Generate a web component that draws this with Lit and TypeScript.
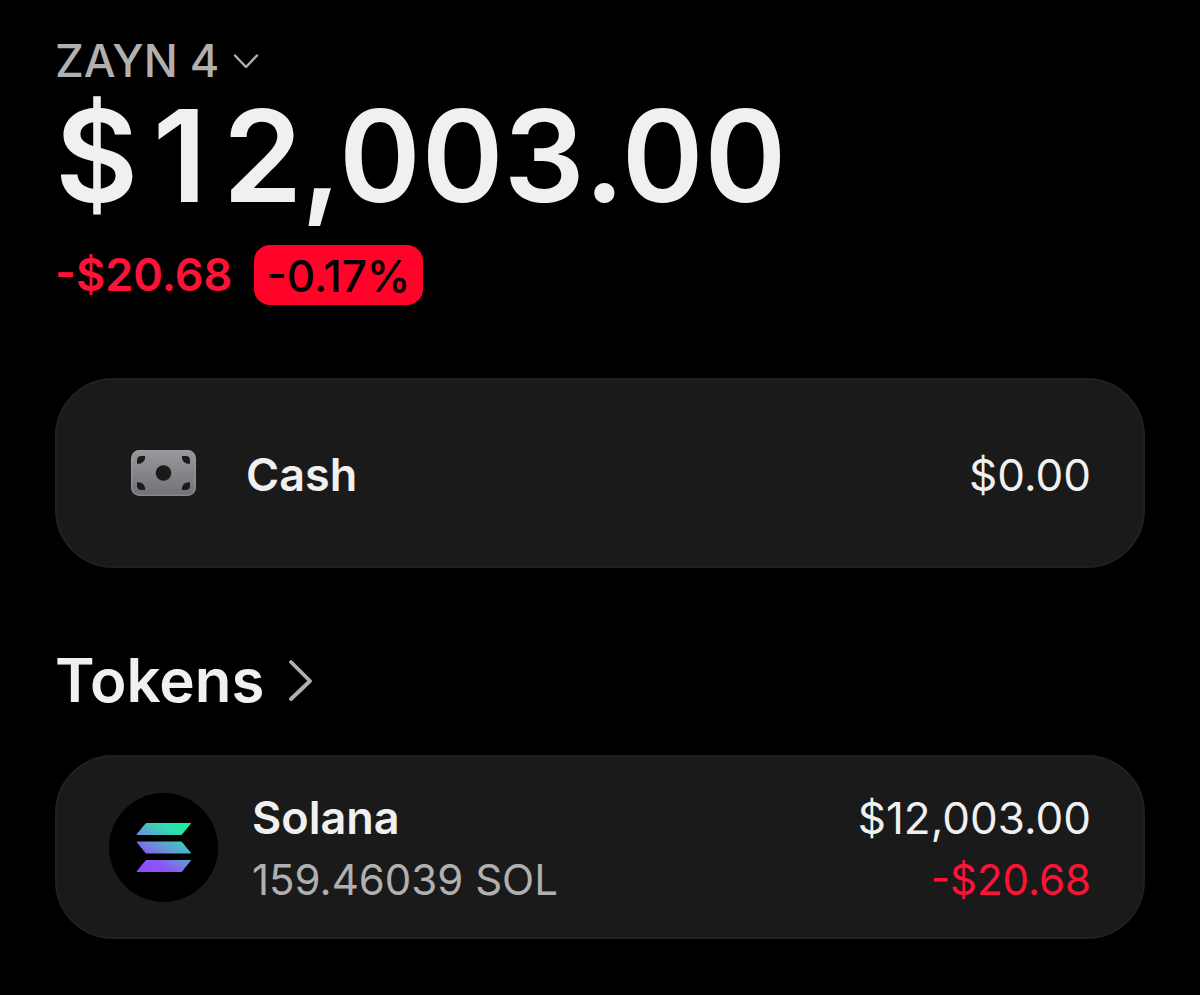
import { LitElement, html, css, svg } from "lit";
import { customElement, property } from "lit/decorators.js";

const cashIcon = svg`
  <svg class="cash" viewBox="0 0 65 46" aria-hidden="true">
    <defs>
      <linearGradient id="note" x1="0" y1="0" x2="0" y2="1">
        <stop offset="0" stop-color="#99989d" />
        <stop offset="1" stop-color="#727176" />
      </linearGradient>
    </defs>
    <rect width="65" height="46" rx="8.5" fill="url(#note)" />
    <rect x=".75" y=".75" width="63.5" height="44.5" rx="7.75" fill="none" stroke="#a5a4a9" stroke-opacity=".4" stroke-width="1.5" />
    <g fill="#1a1a1a">
      <circle cx="32.5" cy="23" r="7.8" />
      <path d="M6 13.8V10.4Q6 6 10.4 6H14C14.6 10.6 11.4 14.2 6 13.8Z" />
      <path d="M59 13.8V10.4Q59 6 54.6 6H51C50.4 10.6 53.6 14.2 59 13.8Z" />
      <path d="M6 32.2V35.6Q6 40 10.4 40H14C14.6 35.4 11.4 31.8 6 32.2Z" />
      <path d="M59 32.2V35.6Q59 40 54.6 40H51C50.4 35.4 53.6 31.8 59 32.2Z" />
    </g>
  </svg>`;

const solanaIcon = svg`
  <svg class="solana" viewBox="0 0 109 109" aria-hidden="true">
    <defs>
      <linearGradient id="sol" gradientUnits="userSpaceOnUse" x1="72" y1="26" x2="38" y2="84">
        <stop offset="0" stop-color="#19f0a0" />
        <stop offset=".22" stop-color="#2fdcae" />
        <stop offset=".5" stop-color="#6696d8" />
        <stop offset=".75" stop-color="#8a56f4" />
        <stop offset="1" stop-color="#9945ff" />
      </linearGradient>
    </defs>
    <circle cx="54.5" cy="54.5" r="54.5" fill="#000" />
    <g fill="url(#sol)" stroke="url(#sol)" stroke-width="1" stroke-linejoin="round">
      <path d="M37 30.5H81.5L72.5 41.5H28Z" />
      <path d="M28 49H72.5L81.5 60H37Z" />
      <path d="M37 67.5H81.5L72.5 78.5H28Z" />
    </g>
  </svg>`;

const icons = { cash: cashIcon, solana: solanaIcon };

@customElement("asset-card")
export class AssetCard extends LitElement {
  @property() icon: keyof typeof icons = "cash";
  @property() name = "";
  @property() amount = "";
  @property() value = "";
  @property() change = "";

  static styles = css`
    :host {
      display: block;
    }
    .card {
      box-sizing: border-box;
      width: 100%;
      display: grid;
      grid-template-columns: 109px 1fr auto;
      align-items: center;
      column-gap: 34px;
      padding: 26px 52px;
      border: 2px solid #202020;
      border-radius: 58px;
      background: #1a1a1a;
      color: #f0f0f0;
      font: inherit;
      font-size: 44px;
      line-height: 62px;
      text-align: left;
      cursor: pointer;
    }
    .single {
      padding-block: 60px;
      column-gap: 28px;
    }
    .icon {
      display: flex;
      justify-content: center;
    }
    .cash {
      width: 65px;
      height: 46px;
    }
    .solana {
      width: 109px;
      height: 109px;
    }
    .lines {
      display: flex;
      flex-direction: column;
      padding-top: 4px;
    }
    .end {
      text-align: right;
    }
    .name {
      font-size: 45px;
      font-weight: 600;
    }
    .sub {
      font-size: 42px;
    }
    .muted {
      color: #b0b0b0;
    }
    .down {
      color: #ff1237;
    }
  `;

  render() {
    return html`
      <button class="card ${this.amount ? "" : "single"}" type="button">
        <span class="icon">${icons[this.icon]}</span>
        <span class="lines">
          <span class="name">${this.name}</span>
          ${this.amount ? html`<span class="sub muted">${this.amount}</span>` : ""}
        </span>
        <span class="lines end">
          <span>${this.value}</span>
          ${this.change ? html`<span class="sub down">${this.change}</span>` : ""}
        </span>
      </button>
    `;
  }
}

@customElement("app-root")
export class AppRoot extends LitElement {
  static styles = css`
    :host {
      display: block;
      box-sizing: border-box;
      min-height: 100vh;
      padding: 32px 55px 56px;
      background: #000;
      color: #f0f0f0;
      font-family: Inter, "Liberation Sans", sans-serif;
    }
    .account {
      display: flex;
      align-items: center;
      gap: 14px;
      padding: 0;
      border: 0;
      background: none;
      color: #b0b0b0;
      font: inherit;
      font-size: 45px;
      font-weight: 500;
      line-height: 58px;
      cursor: pointer;
    }
    .down-arrow {
      width: 26px;
      height: 16px;
    }
    .balance {
      margin: 0;
      font-size: 128px;
      font-weight: 600;
      line-height: 132px;
      font-variant-numeric: tabular-nums;
    }
    /* The tabular 1 has a foot; this keeps the plain one in a full-width cell. */
    .one {
      display: inline-block;
      width: 83px;
      text-align: center;
      font-variant-numeric: proportional-nums;
    }
    .delta {
      display: flex;
      align-items: center;
      gap: 22px;
      margin-top: 23px;
      font-size: 45px;
      line-height: 60px;
      color: #ff1237;
      font-weight: 600;
    }
    .badge {
      padding: 2px 12px 0;
      border-radius: 16px;
      background: #ff0328;
      color: #000;
      font-size: 44px;
      line-height: 58px;
      font-weight: 500;
    }
    .cash-card {
      margin-top: 73px;
    }
    .heading {
      margin: 72px 0 35px;
      font-size: 60px;
      font-weight: 600;
      line-height: 80px;
    }
    .link {
      display: inline-flex;
      align-items: center;
      gap: 24px;
      color: inherit;
      text-decoration: none;
    }
    .right-arrow {
      width: 26px;
      height: 42px;
    }
  `;

  render() {
    return html`
      <main>
        <button class="account" type="button">
          ZAYN 4
          <svg class="down-arrow" viewBox="0 0 26 16" fill="none" stroke="#b0b0b0" stroke-width="2.4" stroke-linecap="round" stroke-linejoin="round" aria-hidden="true">
            <path d="M2 2.5L13 14L24 2.5" />
          </svg>
        </button>
        <h1 class="balance">$<span class="one">1</span>2,003.00</h1>
        <div class="delta">
          <span>-$20.68</span>
          <span class="badge">-0.17%</span>
        </div>
        <asset-card class="cash-card" icon="cash" name="Cash" value="$0.00"></asset-card>
        <h2 class="heading">
          <a class="link" href="#tokens">
            Tokens
            <svg class="right-arrow" viewBox="0 0 26 42" fill="none" stroke="#b0b0b0" stroke-width="3.8" stroke-linecap="round" stroke-linejoin="round" aria-hidden="true">
              <path d="M3 3L22 22L3 40" />
            </svg>
          </a>
        </h2>
        <asset-card
          icon="solana"
          name="Solana"
          amount="159.46039 SOL"
          value="$12,003.00"
          change="-$20.68"
        ></asset-card>
      </main>
    `;
  }
}
